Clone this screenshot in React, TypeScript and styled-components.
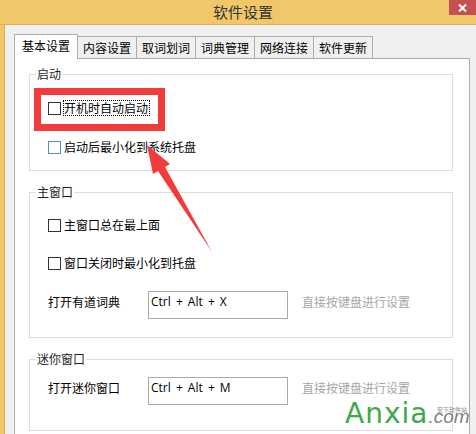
import React from "react";
import styled, { createGlobalStyle } from "styled-components";

const CJK = `"Noto Sans CJK SC", "Noto Sans", sans-serif`;
const LATIN = `"Open Sans", "Noto Sans CJK SC", sans-serif`;

const Global = createGlobalStyle`
  html, body { margin: 0; padding: 0; background: #f0f0f0; }
  body { font-family: ${CJK}; -webkit-font-smoothing: antialiased; }
  * { box-sizing: border-box; }
`;

const Window = styled.div`
  position: relative;
  width: 476px;
  height: 434px;
  overflow: hidden;
  display: flex;
  flex-direction: column;
  background: #f0c869;
`;

const TitleBar = styled.div`
  flex: none;
  height: 25px;
  display: grid;
  grid-template-columns: 1fr auto 1fr;
  align-items: start;
  background: #f0c869;
  border-bottom: 1px solid #dcb059;
`;

const Title = styled.div`
  grid-column: 2;
  padding-left: 10px;
  font-size: 15px;
  line-height: 24px;
  color: #333;
`;

const CloseButton = styled.div`
  grid-column: 3;
  justify-self: end;
  width: 27px;
  height: 15px;
  background: #c75050;
  display: flex;
  align-items: center;
  justify-content: center;
`;

const Body = styled.div`
  flex: 1;
  min-height: 0;
  display: flex;
  flex-direction: column;
  background: #f0f0f0;
  border-left: 4px solid #f0c869;
  box-shadow: inset 1px 0 0 #d9ad56;
  padding: 9px 0 0 10px;
`;

const TabStrip = styled.div`
  flex: none;
  display: flex;
  align-items: flex-end;
  height: 25px;
  margin-bottom: -1px;
  position: relative;
  z-index: 1;
`;

const Tab = styled.div<{ $active?: boolean }>`
  height: ${(p) => (p.$active ? "25px" : "22px")};
  margin-bottom: ${(p) => (p.$active ? "0" : "1px")};
  padding: 3px ${(p) => (p.$active ? "7px" : "5px")} 0;
  border: 1px solid #acacac;
  border-bottom: none;
  background: ${(p) => (p.$active ? "#ffffff" : "#f0f0f0")};
  font-size: 12px;
  line-height: 16px;
  color: #000;
  white-space: nowrap;
  & + & {
    margin-left: -1px;
  }
`;

const Panel = styled.div`
  flex: 1;
  width: 456px;
  background: #fff;
  border: 1px solid #acacac;
  border-bottom: none;
  padding: 7px 0 0 14px;
  display: flex;
  flex-direction: column;
  gap: 13px;
`;

const Group = styled.fieldset`
  margin: 0;
  padding: 0;
  width: 424px;
  min-width: 0;
  border: 1px solid #dcdcdc;
`;

const Legend = styled.legend`
  margin-left: 6px;
  padding: 0 1px;
  font-size: 12px;
  line-height: 16px;
  color: #1e1e1e;
`;

const GroupContent = styled.div<{ $top: number; $gap: number; $bottom: number }>`
  display: flex;
  flex-direction: column;
  gap: ${(p) => p.$gap}px;
  padding: ${(p) => p.$top}px 0 ${(p) => p.$bottom}px 18px;
`;

const CheckRow = styled.div`
  display: flex;
  align-items: center;
  height: 20px;
  gap: 3px;
`;

const Box = styled.span<{ $hover?: boolean }>`
  width: 13px;
  height: 13px;
  flex: none;
  background: #fff;
  border: 1px solid ${(p) => (p.$hover ? "#4a90d0" : "#333333")};
`;

const CheckText = styled.span<{ $focus?: boolean }>`
  font-size: 12px;
  line-height: 14px;
  color: #000;
  outline: ${(p) => (p.$focus ? "1px dotted #000" : "none")};
  padding-right: 1px;
`;

const ShortcutRow = styled.div`
  display: flex;
  align-items: flex-start;
`;

const ShortcutLabel = styled.div`
  width: 100px;
  padding-top: 3px;
  font-size: 12px;
  line-height: 16px;
  color: #000;
`;

const KeyInput = styled.div`
  width: 140px;
  height: 28px;
  border: 1px solid #ababab;
  padding: 2px 2px;
  font-family: ${LATIN};
  font-size: 12px;
  line-height: 16px;
  word-spacing: 2px;
  color: #000;
`;

const Hint = styled.div`
  margin-left: 14px;
  padding-top: 3px;
  font-size: 12px;
  line-height: 16px;
  color: #a6a6a6;
`;

const Overlay = styled.svg`
  position: absolute;
  left: 0;
  top: 0;
  pointer-events: none;
`;

const Watermark = styled.div`
  position: absolute;
  left: 345px;
  top: 397px;
  width: 131px;
  height: 36px;
  display: flex;
  align-items: baseline;
  white-space: nowrap;
  pointer-events: none;
`;

const Brand = styled.span`
  flex: none;
  font-family: "DejaVu Sans", sans-serif;
  font-size: 28px;
  line-height: 34px;
  color: #3caa47;
  letter-spacing: 1px;
`;

const BrandCom = styled.span`
  flex: none;
  font-family: "Liberation Sans", sans-serif;
  font-style: italic;
  font-size: 19px;
  line-height: 22px;
  color: #7f7f7f;
`;

const BrandTag = styled.span`
  position: absolute;
  left: 92px;
  top: 9px;
  font-size: 6px;
  line-height: 7px;
  color: #8a8a8a;
`;

export default function App() {
  return (
    <>
      <Global />
      <Window>
        <TitleBar>
          <Title>软件设置</Title>
          <CloseButton>
            <svg width="9" height="8" viewBox="0 0 9 8">
              <path d="M1 0.5 L8 7.5 M8 0.5 L1 7.5" stroke="#fff" strokeWidth="2" />
            </svg>
          </CloseButton>
        </TitleBar>
        <Body>
          <TabStrip>
            <Tab $active>基本设置</Tab>
            <Tab>内容设置</Tab>
            <Tab>取词划词</Tab>
            <Tab>词典管理</Tab>
            <Tab>网络连接</Tab>
            <Tab>软件更新</Tab>
          </TabStrip>
          <Panel>
            <Group>
              <Legend>启动</Legend>
              <GroupContent $top={16} $gap={19} $bottom={13}>
                <CheckRow>
                  <Box />
                  <CheckText $focus>开机时自动启动</CheckText>
                </CheckRow>
                <CheckRow>
                  <Box $hover />
                  <CheckText>启动后最小化到系统托盘</CheckText>
                </CheckRow>
              </GroupContent>
            </Group>
            <Group>
              <Legend>主窗口</Legend>
              <GroupContent $top={15} $gap={18} $bottom={18}>
                <CheckRow>
                  <Box />
                  <CheckText>主窗口总在最上面</CheckText>
                </CheckRow>
                <CheckRow>
                  <Box />
                  <CheckText>窗口关闭时最小化到托盘</CheckText>
                </CheckRow>
                <ShortcutRow>
                  <ShortcutLabel>打开有道词典</ShortcutLabel>
                  <KeyInput>Ctrl + Alt + X</KeyInput>
                  <Hint>直接按键盘进行设置</Hint>
                </ShortcutRow>
              </GroupContent>
            </Group>
            <Group>
              <Legend>迷你窗口</Legend>
              <GroupContent $top={10} $gap={18} $bottom={25}>
                <ShortcutRow>
                  <ShortcutLabel>打开迷你窗口</ShortcutLabel>
                  <KeyInput>Ctrl + Alt + M</KeyInput>
                  <Hint>直接按键盘进行设置</Hint>
                </ShortcutRow>
              </GroupContent>
            </Group>
          </Panel>
        </Body>
        <Watermark>
          <Brand>Anxia</Brand>
          <BrandCom>.com</BrandCom>
          <BrandTag>安下软件站</BrandTag>
        </Watermark>
        <Overlay width="476" height="434" viewBox="0 0 476 434">
          <rect x="37.5" y="91.5" width="124" height="36" fill="none" stroke="#f23b3b" strokeWidth="7" />
          <polygon
            points="147,145 170,164 165,167 212,252 158,171 153,174"
            fill="#f23b3b"
          />
        </Overlay>
      </Window>
    </>
  );
}
